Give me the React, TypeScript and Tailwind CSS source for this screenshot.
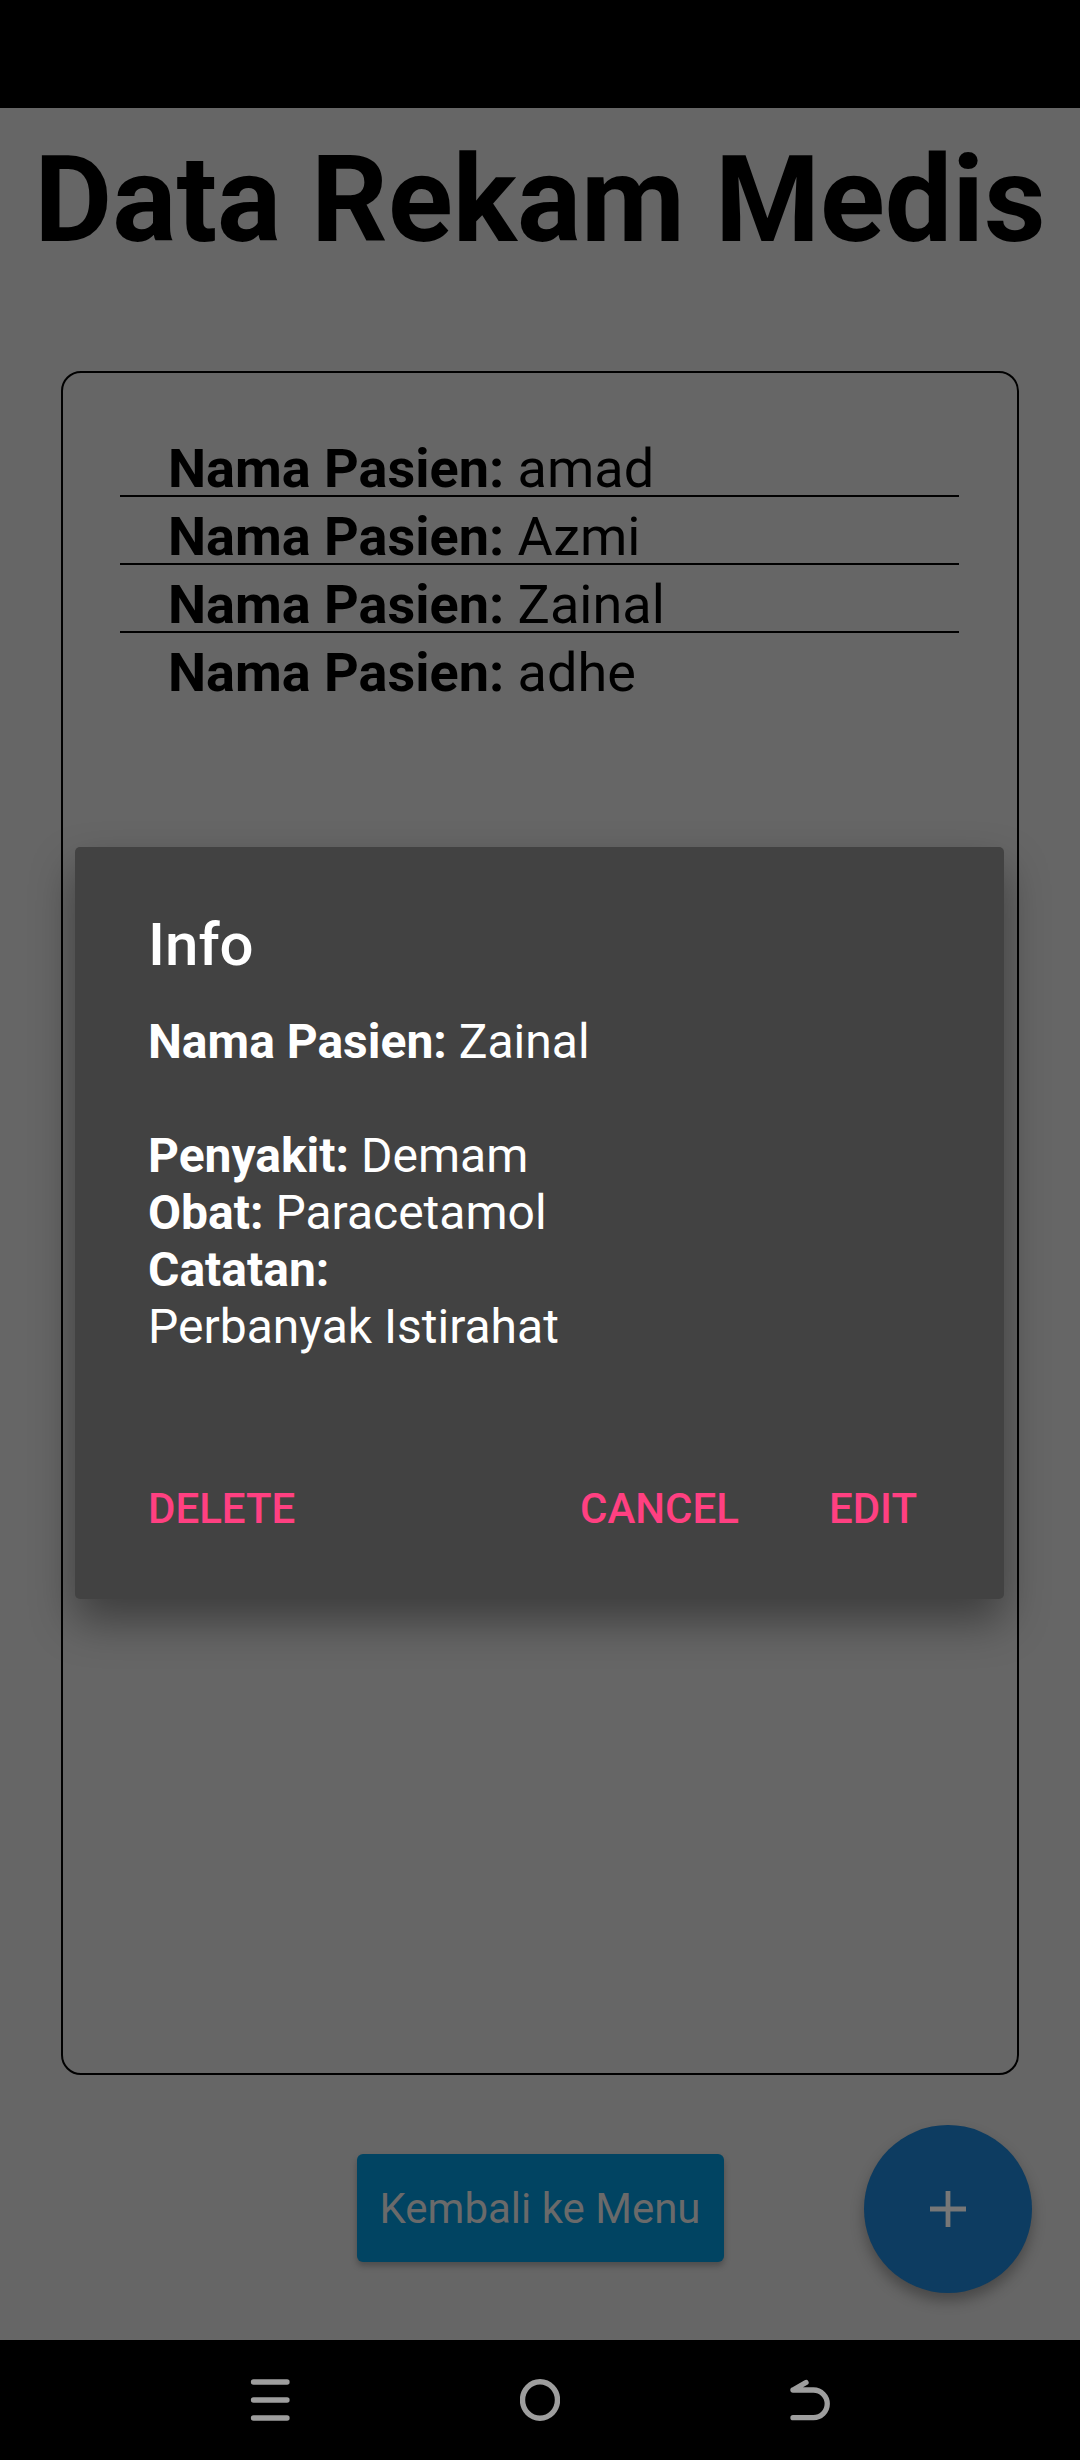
import { Fragment } from "react";

const PATIENTS = ["amad", "Azmi", "Zainal", "adhe"];

const INFO_LINES: [string, string][] = [
  ["Nama Pasien:", " Zainal"],
  ["", ""],
  ["Penyakit:", " Demam"],
  ["Obat:", " Paracetamol"],
  ["Catatan:", ""],
  ["", "Perbanyak Istirahat"],
];

const NavBar = () => (
  <div className="h-[120px] bg-black flex items-center justify-center gap-[230px]">
    <svg width="40" height="42" viewBox="0 0 40 42">
      <g stroke="#9e9e9e" strokeWidth="5.3" strokeLinecap="round">
        <line x1="3.5" y1="3" x2="37" y2="3" />
        <line x1="3.5" y1="21" x2="37" y2="21" />
        <line x1="3.5" y1="39" x2="37" y2="39" />
      </g>
    </svg>
    <svg width="40" height="42" viewBox="0 0 40 42">
      <ellipse cx="20" cy="21" rx="17.5" ry="18.2" fill="none" stroke="#9e9e9e" strokeWidth="5.4" />
    </svg>
    <svg width="40" height="42" viewBox="0 0 40 42">
      <path
        d="M3 11 L23.4 11 A13.85 13.85 0 0 1 23.4 38.7 L3 38.7 M3 11 L16 3.5"
        fill="none"
        stroke="#9e9e9e"
        strokeWidth="5.3"
        strokeLinecap="round"
        strokeLinejoin="round"
      />
    </svg>
  </div>
);

const InfoDialog = () => (
  <div className="absolute left-[75px] top-[847px] w-[929px] h-[752px] bg-[#424242] rounded-[5px] shadow-[0_22px_44px_rgba(0,0,0,0.4)] pl-[73px] pr-[87px] pt-[63px] text-white">
    <div className="text-[60px] leading-[70px] font-medium">Info</div>
    <div className="mt-[33px] text-[48px] leading-[57px]">
      {INFO_LINES.map(([label, value], i) => (
        <div key={i} className="h-[57px] whitespace-pre">
          {label && <span className="font-bold">{label}</span>}
          {value}
        </div>
      ))}
    </div>
    <div className="mt-[129px] flex items-center text-[42px] leading-[49px] font-medium text-[#ff4081] uppercase">
      <span>Delete</span>
      <span className="ml-auto">Cancel</span>
      <span className="ml-[90px]">Edit</span>
    </div>
  </div>
);

export default function App() {
  return (
    <div
      className="relative w-[1080px] h-[2460px] flex flex-col bg-[#666666] overflow-hidden"
      style={{ fontFamily: "Roboto, 'Liberation Sans', sans-serif" }}
    >
      {/* status bar */}
      <div className="h-[108px] bg-black" />

      <div className="flex-1 flex flex-col relative">
        <h1 className="mt-[22px] text-center text-[120px] leading-[141px] font-bold text-black">
          Data Rekam Medis
        </h1>

        <div className="mt-[100px] mx-[61px] h-[1704px] border-2 border-black rounded-[20px]">
          <div className="ml-[57px] mr-[58px] pt-[56px]">
            {PATIENTS.map((name, i) => (
              <Fragment key={name}>
                <div
                  className={
                    "pt-[14px] pl-[48px] text-[54px] leading-[52px] text-black " +
                    (i < PATIENTS.length - 1 ? "border-b-2 border-black" : "")
                  }
                >
                  <span className="font-bold">Nama Pasien:</span> {name}
                </div>
              </Fragment>
            ))}
          </div>
        </div>

        <div className="mt-[79px] flex justify-center">
          <button className="w-[367px] h-[108px] rounded-[6px] bg-[#014462] text-[#6a6a6a] text-[42px] shadow-[0_4px_6px_rgba(0,0,0,0.25)]">
            Kembali ke Menu
          </button>
        </div>

        <button className="absolute right-[48px] bottom-[47px] w-[168px] h-[168px] rounded-full bg-[#0d3c61] flex items-center justify-center shadow-[0_8px_14px_rgba(0,0,0,0.3)]">
          <svg width="36" height="36" viewBox="0 0 36 36">
            <g stroke="#777777" strokeWidth="4.8">
              <line x1="0" y1="18" x2="36" y2="18" />
              <line x1="18" y1="0" x2="18" y2="36" />
            </g>
          </svg>
        </button>
      </div>

      <NavBar />

      <InfoDialog />
    </div>
  );
}
